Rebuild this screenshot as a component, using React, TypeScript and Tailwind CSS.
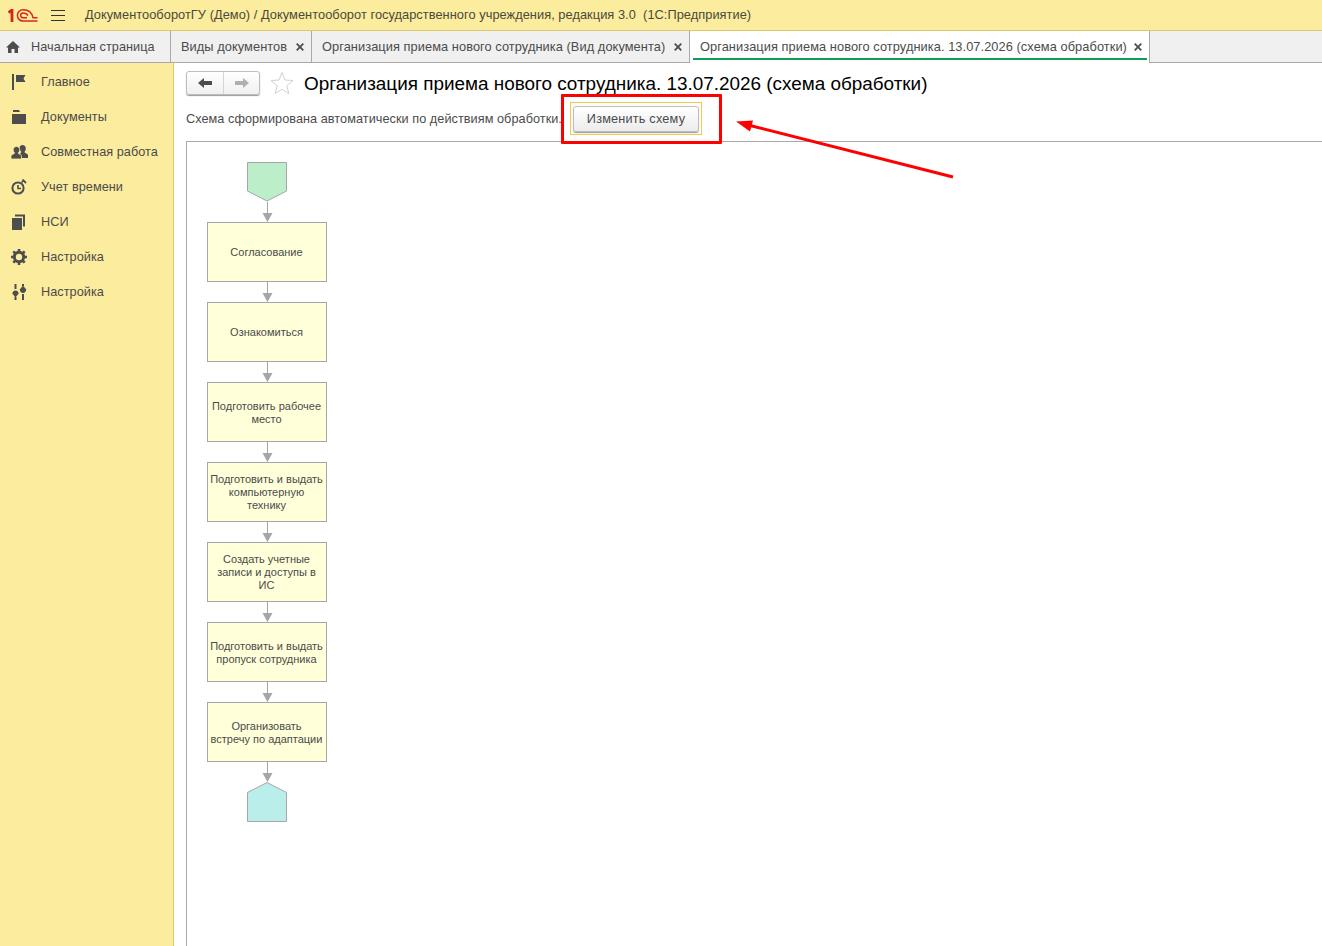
import { Fragment } from "react";

const tabs = [
  { title: "Виды документов", width: "w-[141px]" },
  { title: "Организация приема нового сотрудника (Вид документа)", width: "w-[378px]" },
];

const steps = [
  ["Согласование"],
  ["Ознакомиться"],
  ["Подготовить рабочее", "место"],
  ["Подготовить и выдать", "компьютерную", "технику"],
  ["Создать учетные", "записи и доступы в", "ИС"],
  ["Подготовить и выдать", "пропуск сотрудника"],
  ["Организовать", "встречу по адаптации"],
];

const FlagIcon = () => (
  <svg width="16" height="16" viewBox="0 0 16 16" fill="#4d4d4d">
    <rect x="1" y="0" width="2" height="16" />
    <path d="M5 1h9.500l-2 3.500 2 3.500H5z" />
  </svg>
);

const FolderIcon = () => (
  <svg width="16" height="16" viewBox="0 0 16 16" fill="#4d4d4d">
    <path d="M2 1h6l1 2H2z" />
    <path d="M1 5h14v10H1z" />
  </svg>
);

const PeopleIcon = () => (
  <svg width="17" height="16" viewBox="0 0 17 16" fill="#4d4d4d">
    <path d="M11.500 1c2 0 3.300 1.500 3.300 3.500 0 1.300-.5 2.500-1.300 3.300 0 .8.700 1.200 1.700 1.600 1 .4 1.800 1 1.800 2.100V14H9V11c0-1.300.7-2 1.500-3.200C9.500 7 8.500 5.800 8.500 4.500 8.500 2.500 9.500 1 11.500 1z" />
    <path d="M5.500 2.500c2 0 3.200 1.400 3.200 3.300 0 1.300-.6 2.400-1.500 3 .1.900 1 1.200 2 1.600.9.400 1.300 1 1.300 1.900V15H0v-2.700c0-.9.600-1.500 1.600-1.900 1-.4 1.900-.7 2-1.600-.9-.6-1.400-1.700-1.400-3 0-1.900 1.300-3.300 3.300-3.300z" stroke="#fbec9e" strokeWidth="0.800" />
  </svg>
);

const TimerIcon = () => (
  <svg width="16" height="16" viewBox="0 0 16 16" fill="none" stroke="#4d4d4d">
    <circle cx="7" cy="9" r="5.600" strokeWidth="2" />
    <path d="M7 6v3.500h3" strokeWidth="1.600" />
    <path d="M10.500 3.500l2-2" strokeWidth="1.600" />
    <path d="M11.500 0.500l3.500 3.500" strokeWidth="1.800" />
  </svg>
);

const CopyIcon = () => (
  <svg width="16" height="16" viewBox="0 0 16 16" fill="#4d4d4d">
    <path d="M1 4h10v12H1z" />
    <path d="M4 0.500h10v12h-2V2.500H4z" />
  </svg>
);

const GearIcon = () => (
  <svg width="16" height="16" viewBox="0 0 16 16" fill="none" stroke="#4d4d4d">
    <circle cx="8" cy="8" r="4.700" strokeWidth="3" />
    <path d="M8 0v3M8 13v3M0 8h3M13 8h3M2.300 2.300l2.200 2.200M11.500 11.500l2.200 2.200M13.700 2.300l-2.200 2.200M4.500 11.500l-2.200 2.200" strokeWidth="2.600" />
  </svg>
);

const SlidersIcon = () => (
  <svg width="16" height="16" viewBox="0 0 16 16" fill="#4d4d4d">
    <rect x="3.500" y="0" width="2" height="5" />
    <path d="M4.500 6.500l3 3.700c.4 2-1.200 3.300-3 3.300s-3.400-1.300-3-3.300z" transform="rotate(180 4.500 10)" />
    <rect x="3.500" y="13" width="2" height="3" />
    <rect x="11" y="0" width="2" height="2" />
    <path d="M12 1.500l3 3.700c.4 2-1.200 3.800-3 3.800s-3.400-1.800-3-3.800z" />
    <rect x="11" y="10" width="2" height="6" />
  </svg>
);

const menu = [
  { label: "Главное", icon: <FlagIcon /> },
  { label: "Документы", icon: <FolderIcon /> },
  { label: "Совместная работа", icon: <PeopleIcon /> },
  { label: "Учет времени", icon: <TimerIcon /> },
  { label: "НСИ", icon: <CopyIcon /> },
  { label: "Настройка", icon: <GearIcon /> },
  { label: "Настройка", icon: <SlidersIcon /> },
];

const CloseIcon = () => (
  <svg width="8" height="8" viewBox="0 0 8 8" stroke="#4d4d4d" strokeWidth="1.800" className="shrink-0">
    <path d="M0.700 0.700l6.600 6.600M7.300 0.700l-6.600 6.600" />
  </svg>
);

const Connector = () => (
  <svg width="120" height="20" viewBox="0 0 120 20" className="block">
    <path d="M60.500 0v12" stroke="#a6a6a6" strokeWidth="1" />
    <path d="M55.500 11h10l-5 9z" fill="#a6a6a6" />
  </svg>
);

const App = () => {
  return (
    <div className="relative h-[946px] w-[1322px] overflow-hidden bg-white font-['Liberation_Sans',sans-serif] text-[12.7px] tracking-[0.05px] text-[#4b4b4b]">
      <div className="flex h-[31px] items-center border-b border-[#d9c96c] bg-[#fbec9e]">
        <svg width="30" height="13" viewBox="0 0 30 13" className="ml-[8px]" fill="none" stroke="#d6261c">
          <path d="M0.500 3.500L4 1v12" strokeWidth="2.800" />
          <path d="M15 0.800C21 0.800 24 4 25 8.700H29.500" strokeWidth="1.500" />
          <path d="M15 0.800A5.600 5.600 0 0 0 15 12H29.500" strokeWidth="1.500" />
          <path d="M19 8.700H15A2.300 2.300 0 0 1 15 4C17 4 19 5 20 6.500" strokeWidth="1.500" />
        </svg>
        <div className="ml-[13px] flex w-[14px] flex-col gap-[4px]">
          <div className="h-px bg-[#333]" />
          <div className="h-px bg-[#333]" />
          <div className="h-px bg-[#333]" />
        </div>
        <span className="ml-[20px] text-[12.8px] text-[#4a4a3a]">
          ДокументооборотГУ (Демо) / Документооборот государственного учреждения, редакция 3.0 &nbsp;(1С:Предприятие)
        </span>
      </div>

      <div className="flex h-[32px] border-b border-[#a9a9a9] bg-[#f0f0f0]">
        <div className="flex w-[171px] items-center border-r border-[#a9a9a9] pl-[6px]">
          <svg width="14" height="12" viewBox="0 0 14 12" fill="#4d4d4d">
            <path d="M7 0L0 6.500h2V12h3.500V8h3v4H12V6.500h2z" />
          </svg>
          <span className="ml-[11px] pt-[2px]">Начальная страница</span>
        </div>
        {tabs.map((tab) => (
          <div key={tab.title} className={`flex items-center justify-between border-r border-[#a9a9a9] pl-[10px] pr-[7px] text-[12.8px] tracking-[0.07px] ${tab.width}`}>
            <span>{tab.title}</span>
            <CloseIcon />
          </div>
        ))}
        <div className="relative -mb-px flex w-[460px] items-center justify-between border-r border-[#a9a9a9] bg-white pl-[10px] pr-[7px] text-[12.8px] tracking-[0.07px]">
          <span>Организация приема нового сотрудника. 13.07.2026 (схема обработки)</span>
          <CloseIcon />
          <div className="absolute bottom-[3px] left-[3px] right-[2px] h-[2px] bg-[#0f9d58]" />
        </div>
      </div>

      <div className="flex h-[883px]">
        <aside className="flex w-[174px] shrink-0 flex-col border-r border-[#d9c96c] bg-[#fbec9e] pt-px">
          {menu.map((item, index) => (
            <div key={index} className="flex h-[35px] items-center pl-[11px]">
              <span className="flex w-[30px] items-center">{item.icon}</span>
              <span className="pt-[2px]">{item.label}</span>
            </div>
          ))}
        </aside>

        <main className="flex min-w-0 flex-1 flex-col pl-[12px] pt-[8px]">
          <div className="flex h-[24px] items-center">
            <div className="flex h-[24px] w-[74px] rounded-[3px] border border-[#bdbdbd] bg-gradient-to-b from-white to-[#f0f0f0] shadow-[0_1px_1px_#999]">
              <div className="flex w-[37px] items-center justify-center border-r border-[#d5d5d5]">
                <svg width="14" height="10" viewBox="0 0 14 10" fill="#4d4d4d">
                  <path d="M0 5l6-5v3h8v4H6v3z" />
                </svg>
              </div>
              <div className="flex flex-1 items-center justify-center">
                <svg width="14" height="10" viewBox="0 0 14 10" fill="#b0b0b0">
                  <path d="M14 5L8 0v3H0v4h8v3z" />
                </svg>
              </div>
            </div>
            <svg width="24" height="24" viewBox="0 0 24 24" className="ml-[10px]" fill="#fff" stroke="#cfd2d6" strokeWidth="1">
              <path d="M12 1.500l3 7.500 8 .6-6.200 5.100 2 7.800L12 18.200l-6.800 4.300 2-7.800L1 9.600l8-.6z" />
            </svg>
            <h1 className="ml-[10px] whitespace-nowrap pt-[1px] text-[18.9px] font-normal leading-[24px] tracking-normal text-black">
              Организация приема нового сотрудника. 13.07.2026 (схема обработки)
            </h1>
          </div>

          <div className="mt-[7px] flex h-[33px] items-center">
            <span className="w-[384px] shrink-0 whitespace-nowrap pt-[3px]">Схема сформирована автоматически по действиям обработки.</span>
            <div className="flex h-[33px] w-[132px] items-center justify-center border border-[#f5c842]">
              <div className="flex h-[26px] w-[126px] items-center justify-center rounded-[3px] border border-[#bdbdbd] bg-gradient-to-b from-white to-[#ececec] pt-[2px] tracking-[0.2px] shadow-[0_1px_1px_#999]">
                Изменить схему
              </div>
            </div>
          </div>

          <div className="mt-[6px] flex-1 border-l border-t border-[#a9a9a9] pl-[20px] pt-[20px]">
            <div className="flex w-[120px] flex-col">
              <svg width="120" height="40" viewBox="0 0 120 40" className="block">
                <path d="M40.500 0.500h39v28.500l-19.500 10-19.500-10z" fill="#bbeec9" stroke="#a6a6a6" />
              </svg>
              <Connector />
              {steps.map((lines, index) => (
                <Fragment key={index}>
                  <div className={`flex h-[60px] flex-col items-center justify-center border border-[#a6a6a6] bg-[#ffffd9] pr-[1px] text-[11px] leading-[13px] tracking-normal text-[#4b4b4b] ${lines.length === 2 ? "pt-[2px]" : ""}`}>
                    {lines.map((line) => (
                      <span key={line} className="whitespace-nowrap">
                        {line}
                      </span>
                    ))}
                  </div>
                  <Connector />
                </Fragment>
              ))}
              <svg width="120" height="40" viewBox="0 0 120 40" className="block">
                <path d="M40.500 10.500l19.500-10 19.500 10v29h-39z" fill="#b9eeea" stroke="#a6a6a6" />
              </svg>
            </div>
          </div>
        </main>
      </div>

      <div className="absolute left-[561px] top-[94px] h-[50px] w-[161px] rounded-[1px] border-[3px] border-[#fe0000]" />
      <svg width="230" height="70" viewBox="0 0 230 70" className="absolute left-[730px] top-[115px]" fill="#fe0000">
        <path d="M223 62L20 10.500" stroke="#fe0000" strokeWidth="3" />
        <path d="M6 6.500l17-1-3 11z" />
      </svg>
    </div>
  );
};

export default App;
